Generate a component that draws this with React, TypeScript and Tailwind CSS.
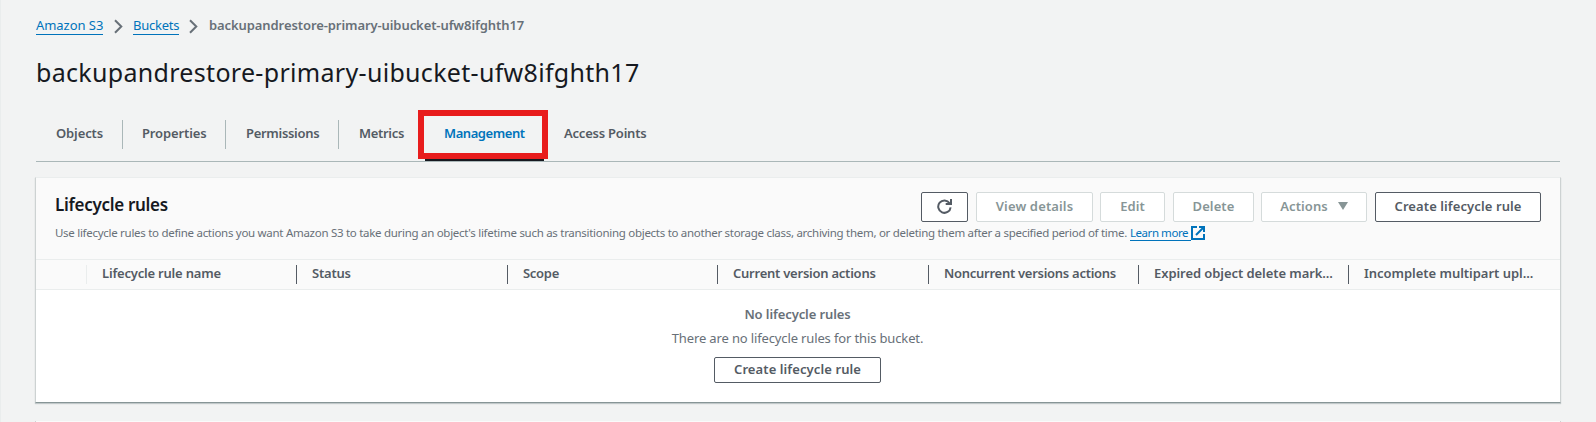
import type { ReactNode } from 'react';

function Crumb({ children, className }: { children: ReactNode; className: string }) {
  return (
    <a className={`block h-[20px] whitespace-nowrap border-b border-[#0073bb] text-[13px] leading-[21px] text-[#0073bb] ${className}`}>
      {children}
    </a>
  );
}

function Chevron({ className }: { className: string }) {
  return (
    <svg className={className} width="9" height="15" viewBox="0 0 9 15" fill="none" stroke="#687078" strokeWidth="2">
      <path d="M1 1.2 7.3 7.5 1 13.8" />
    </svg>
  );
}

const tabs = [
  { label: 'Objects', cell: 'w-[87px] pl-5', text: 'tracking-[-0.124px]', divider: true },
  { label: 'Properties', cell: 'w-[103px] pl-[19px]', text: 'tracking-[-0.13px]', divider: true },
  { label: 'Permissions', cell: 'w-[113px] pl-[20px]', text: 'tracking-[-0.3px]', divider: true },
  { label: 'Metrics', cell: 'w-[86px] pl-[20px]', text: 'tracking-[-0.317px]', divider: false },
];

const columns = [
  { label: 'Lifecycle rule name', cell: 'w-[210px]', text: 'tracking-[-0.2px]' },
  { label: 'Status', cell: 'w-[211px]', text: 'tracking-[-0.2px]' },
  { label: 'Scope', cell: 'w-[210px]', text: 'tracking-[-0.3px]' },
  { label: 'Current version actions', cell: 'w-[211px]', text: 'tracking-[-0.24px]' },
  { label: 'Noncurrent versions actions', cell: 'w-[210px]', text: 'tracking-[-0.274px]' },
  { label: 'Expired object delete mark...', cell: 'w-[210px]', text: 'tracking-[-0.07px]' },
  { label: 'Incomplete multipart upl...', cell: 'w-[212px]', text: 'tracking-[-0.03px]' },
];

function Button({ children, className, disabled }: { children: ReactNode; className: string; disabled?: boolean }) {
  return (
    <button
      className={`flex shrink-0 items-center justify-center rounded-[2px] border bg-white pb-[2px] text-[13px] font-semibold leading-[20px] ${
        disabled ? 'border-[#d5dbdb] text-[#879596]' : 'border-[#545b64] text-[#545b64]'
      } ${className}`}
    >
      {children}
    </button>
  );
}

export default function App() {
  return (
    <div className="flex h-[422px] w-[1596px] flex-col overflow-hidden border-l border-[#eaeded] bg-[#f2f3f3] pl-[35px] font-['Noto_Sans',sans-serif] text-[#545b64]">
      <nav className="flex h-[45px] shrink-0 items-start pt-[15px]">
        <Crumb className="w-[67px] tracking-[-0.05px]">Amazon S3</Crumb>
        <Chevron className="ml-[11px] mt-[4px]" />
        <Crumb className="ml-[10px] w-[46px] tracking-[-0.25px]">Buckets</Crumb>
        <Chevron className="ml-[10px] mt-[4px]" />
        <span className="ml-[11px] text-[13px] font-semibold leading-[21px] tracking-[-0.085px] text-[#687078]">
          backupandrestore-primary-uibucket-ufw8ifghth17
        </span>
      </nav>

      <h1 className="h-[62px] shrink-0 pt-[9px] text-[25px] leading-[36px] tracking-[0.31px] text-[#16191f]">
        backupandrestore-primary-uibucket-ufw8ifghth17
      </h1>

      <div className="flex h-[55px] w-[1524px] shrink-0 border-b border-[#aab7b8]">
        {tabs.map((tab) => (
          <div
            key={tab.label}
            className={`mt-[13px] h-[29px] shrink-0 whitespace-nowrap text-[13px] font-semibold leading-[26px] ${
              tab.divider ? 'border-r border-[#aab7b8]' : ''
            } ${tab.cell} ${tab.text}`}
          >
            {tab.label}
          </div>
        ))}
        <div className="relative h-[54px] w-[119px] shrink-0 border-b-2 border-[#16191f] pl-[19px] pt-[13px] text-[13px] font-semibold leading-[26px] tracking-[-0.43px] text-[#0073bb]">
          Management
          <div className="absolute -left-[7px] top-[3px] h-[49px] w-[130px] border-[6px] border-[#e81c1c]" />
        </div>
        <div className="ml-[20px] mt-[13px] text-[13px] font-semibold leading-[26px] tracking-[-0.22px]">
          Access Points
        </div>
      </div>

      <section className="-ml-px mt-[15px] h-[226px] w-[1526px] shrink-0 border-x border-x-[#cdd2d2] border-b border-b-[#879596] border-t border-t-[#eaeded] bg-white shadow-[0_1px_1px_0_rgba(0,28,36,0.2)]">
        <header className="h-[81px] bg-[#fafafa] pl-[19px] pr-[19px]">
          <div className="flex h-[44px] justify-between">
            <h2 className="pt-[15px] text-[17px] font-semibold leading-[24px] tracking-[-0.3px] text-[#16191f]">
              Lifecycle rules
            </h2>
            <div className="flex h-[44px] pt-[14px]">
              <Button className="w-[47px]">
                <svg className="mt-px" width="15" height="15" viewBox="0 0 15 15" fill="none" stroke="currentColor" strokeWidth="2">
                  <path d="M13.6 8.3A6.2 6.2 0 1 1 12.6 4.2" />
                  <path d="M14 0V5H8.7" />
                </svg>
              </Button>
              <Button disabled className="ml-[8px] w-[117px] tracking-[0.142px]">View details</Button>
              <Button disabled className="ml-[7px] w-[65px] tracking-[0.1px]">Edit</Button>
              <Button disabled className="ml-[8px] w-[81px] tracking-[0.1px]">Delete</Button>
              <Button disabled className="ml-[7px] w-[106px] tracking-[0.1px]">
                Actions
                <svg className="ml-[10px]" width="10" height="8" viewBox="0 0 10 8" fill="currentColor">
                  <path d="M0 0H10L5 8Z" />
                </svg>
              </Button>
              <Button className="ml-[8px] w-[166px] tracking-[0.095px]">Create lifecycle rule</Button>
            </div>
          </div>
          <div className="flex whitespace-nowrap text-[11.5px] leading-[20px]">
            <p className="w-[1075px] shrink-0 pt-px tracking-[-0.287px] text-[#687078]">
              Use lifecycle rules to define actions you want Amazon S3 to take during an object's lifetime such as transitioning
              objects to another storage class, archiving them, or deleting them after a specified period of time.
            </p>
            <a className="h-[19px] w-[61px] shrink-0 border-b border-[#0073bb] pt-px tracking-[-0.45px] text-[#0073bb]">
              Learn more
            </a>
            <svg className="mt-[4px]" width="14" height="14" viewBox="0 0 14 14" fill="none" stroke="#0073bb" strokeWidth="2">
              <path d="M6 1H1V13H13V8" />
              <path d="M8 1H13V6M13 1 5 9" />
            </svg>
          </div>
        </header>

        <div className="flex h-[31px] border-y border-[#eaeded] bg-[#fafafa] pt-[5px]">
          <div className="h-[19px] w-[51px] shrink-0 border-r border-[#eaeded]" />
          {columns.map((col, i) => (
            <div
              key={col.label}
              className={`h-[19px] shrink-0 whitespace-nowrap pl-[15px] text-[13px] font-semibold leading-[17px] ${
                i < columns.length - 1 ? 'border-r border-[#545b64]' : ''
              } ${col.cell} ${col.text}`}
            >
              {col.label}
            </div>
          ))}
        </div>

        <div className="flex flex-col items-center pr-px pt-[14px] text-[13px] leading-[20px] text-[#687078]">
          <p className="font-semibold tracking-[-0.1px]">No lifecycle rules</p>
          <p className="mt-[4px] tracking-[-0.137px]">There are no lifecycle rules for this bucket.</p>
          <Button className="mt-[9px] h-[26px] w-[167px] tracking-[0.095px]">Create lifecycle rule</Button>
        </div>
      </section>

      <section className="-ml-px mt-[18px] h-[40px] w-[1526px] shrink-0 border-x border-[#cdd2d2] bg-[#fafafa]" />
    </div>
  );
}
